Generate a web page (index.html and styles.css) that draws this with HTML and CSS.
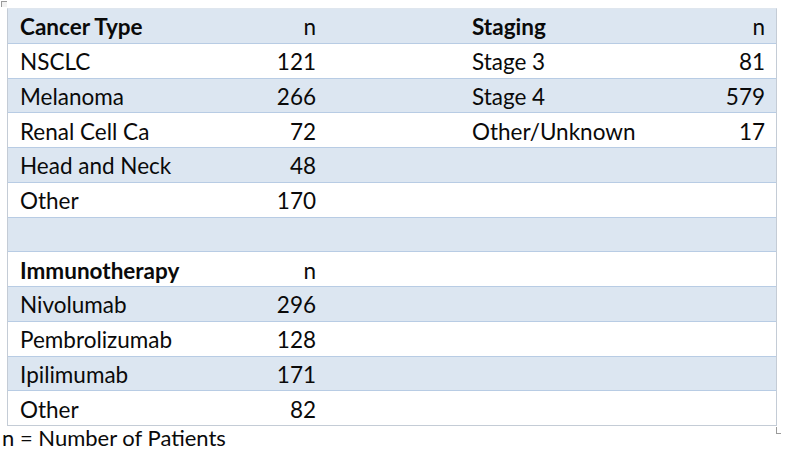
FILE: index.html
```html
<!DOCTYPE html>
<html>
<head>
<meta charset="utf-8">
<link rel="stylesheet" href="styles.css">
</head>
<body>
<div class="page">
  <span class="mark-tl"></span>
  <div class="table">
    <div class="row shade head"><span class="lbl">Cancer Type</span><span class="num n">n</span><span></span><span class="lbl">Staging</span><span class="num n">n</span></div>
    <div class="row"><span class="lbl">NSCLC</span><span class="num">121</span><span></span><span class="lbl">Stage 3</span><span class="num">81</span></div>
    <div class="row shade"><span class="lbl">Melanoma</span><span class="num">266</span><span></span><span class="lbl">Stage 4</span><span class="num">579</span></div>
    <div class="row"><span class="lbl">Renal Cell Ca</span><span class="num">72</span><span></span><span class="lbl">Other/Unknown</span><span class="num">17</span></div>
    <div class="row shade"><span class="lbl">Head and Neck</span><span class="num">48</span><span></span><span></span><span></span></div>
    <div class="row"><span class="lbl">Other</span><span class="num">170</span><span></span><span></span><span></span></div>
    <div class="row shade"><span></span><span></span><span></span><span></span><span></span></div>
    <div class="row head"><span class="lbl">Immunotherapy</span><span class="num n">n</span><span></span><span></span><span></span></div>
    <div class="row shade"><span class="lbl">Nivolumab</span><span class="num">296</span><span></span><span></span><span></span></div>
    <div class="row"><span class="lbl">Pembrolizumab</span><span class="num">128</span><span></span><span></span><span></span></div>
    <div class="row shade"><span class="lbl">Ipilimumab</span><span class="num">171</span><span></span><span></span><span></span></div>
    <div class="row last"><span class="lbl">Other</span><span class="num">82</span><span></span><span></span><span></span></div>
    <span class="mark-br"></span>
  </div>
  <p class="caption">n = Number of Patients</p>
</div>
</body>
</html>
```

FILE: styles.css
```css
html, body {
  margin: 0;
  padding: 0;
  background: #ffffff;
}
body {
  font-family: Lato, "Open Sans", "Liberation Sans", sans-serif;
  color: #0a0a0a;
  font-size: 22.5px;
  width: 785px;
  height: 451px;
  overflow: hidden;
}
.page {
  position: relative;
  padding: 8px 0 0 7px;
}
.mark-tl {
  position: absolute;
  left: 1px;
  top: 1px;
  width: 5px;
  height: 5px;
  border-left: 1px solid #9a9a9a;
  border-top: 1px solid #9a9a9a;
  background: #f2f2f2;
}
.table {
  position: relative;
  width: 770px;
  border-left: 1px solid #c4ccd6;
  border-right: 1px solid #c4ccd6;
  border-top: 1px solid #dfe6ee;
  box-sizing: border-box;
}
.row {
  display: grid;
  grid-template-columns: 212px 109px 131px 167px 149px;
  height: 34.75px;
  box-sizing: border-box;
  border-bottom: 1px solid #b8cce4;
  align-items: center;
  background: #ffffff;
}
.row > span {
  padding-top: 3px;
  line-height: 26px;
}
.row.shade {
  background: #dce6f1;
}
.row.last {
  border-bottom: 1px solid #c4ccd6;
}
.lbl {
  padding-left: 12px;
  white-space: nowrap;
}
.num {
  text-align: right;
  padding-right: 13px;
}
.row > .num:last-child {
  padding-right: 11px;
}
.head .lbl {
  font-weight: 700;
}
.mark-br {
  position: absolute;
  right: -5px;
  bottom: -8px;
  width: 4px;
  height: 6px;
  border-left: 1px solid #9a9a9a;
  border-bottom: 1px solid #9a9a9a;
}
.caption {
  margin: 0;
  margin-left: -5px;
  padding-top: 1px;
  font-size: 22px;
  line-height: 22px;
  white-space: nowrap;
}
```
